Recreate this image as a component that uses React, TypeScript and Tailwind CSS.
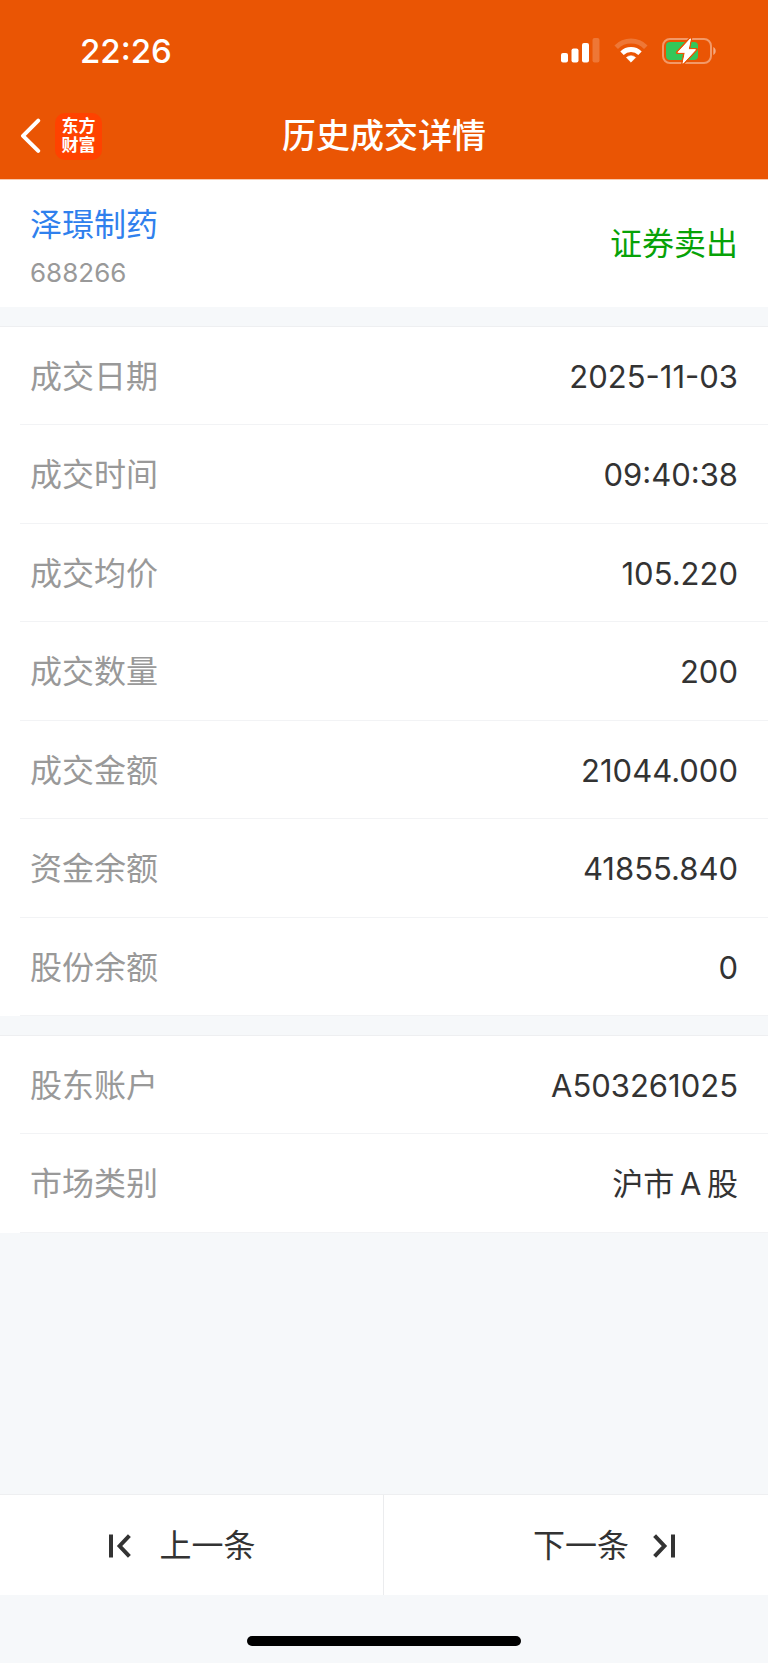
import clsx from "clsx";

type DetailItem = {
  label: string;
  value: string;
};

const tradeItems: DetailItem[] = [
  { label: "成交日期", value: "2025-11-03" },
  { label: "成交时间", value: "09:40:38" },
  { label: "成交均价", value: "105.220" },
  { label: "成交数量", value: "200" },
  { label: "成交金额", value: "21044.000" },
  { label: "资金余额", value: "41855.840" },
  { label: "股份余额", value: "0" },
];

// thin spaces around the latin letter
const accountItems: DetailItem[] = [
  { label: "股东账户", value: "A503261025" },
  { label: "市场类别", value: "沪市\u2009A\u2009股" },
];

function SignalIcon() {
  return (
    <svg width="39" height="26" viewBox="0 0 39 26" fill="white">
      <rect x="0" y="15" width="7" height="9.5" rx="2" />
      <rect x="10.5" y="10.5" width="7" height="14" rx="2" />
      <rect x="21" y="5" width="7" height="19.5" rx="2" />
      <rect x="31.5" y="0" width="7" height="24.5" rx="2" opacity="0.2" />
    </svg>
  );
}

function WifiIcon() {
  return (
    <svg width="34" height="26" viewBox="0 0 34 26" fill="none">
      <path
        d="M2.2 9.2a21 21 0 0 1 29.6 0"
        stroke="white"
        strokeWidth="5"
        opacity="0.2"
      />
      <path d="M8 15.2a12.8 12.8 0 0 1 18 0" stroke="white" strokeWidth="4.8" />
      <path
        d="M17 24.2l-4.6-4.6a6.6 6.6 0 0 1 9.2 0z"
        fill="white"
        stroke="white"
        strokeWidth="0.6"
        strokeLinejoin="round"
      />
    </svg>
  );
}

function BatteryIcon() {
  return (
    <svg width="54" height="26" viewBox="0 0 54 26" fill="none">
      <rect
        x="1"
        y="1"
        width="48"
        height="24"
        rx="7"
        stroke="white"
        strokeOpacity="0.4"
        strokeWidth="2"
      />
      <path d="M51.3 9c3.2 1.4 3.2 6.6 0 8z" fill="white" fillOpacity="0.5" />
      <rect x="4" y="4" width="32" height="18" rx="4" fill="#34c759" />
      <path
        d="M28.8 0L15.4 14.6h7.4L20.6 26 34.2 11.4h-7.6z"
        fill="white"
        stroke="#ea5504"
        strokeWidth="3"
        strokeLinejoin="round"
        paintOrder="stroke"
      />
      <path
        d="M28.4 1L16.4 14.2h7.2L21.2 25 33.2 11.8H26z"
        fill="white"
        stroke="white"
        strokeWidth="1"
        strokeLinejoin="round"
      />
    </svg>
  );
}

function SkipIcon({ flipped }: { flipped?: boolean }) {
  return (
    <svg
      width="22"
      height="24"
      viewBox="0 0 22 24"
      fill="none"
      stroke="#333333"
      strokeWidth="4"
      className={clsx(flipped && "-scale-x-100")}
    >
      <path d="M2 0.5v23" />
      <path d="M20.4 1.6L10.6 12l9.8 10.4" />
    </svg>
  );
}

function DetailSection({ items }: { items: DetailItem[] }) {
  return (
    <dl className="border-t border-[#eeeff1] bg-white">
      {items.map((item) => (
        <div key={item.label} className="group pl-5">
          <div className="flex h-[98px] items-center justify-between border-b border-[#f2f3f5] pt-0.5 pr-[30px] pl-2.5 group-even:h-[99px]">
            <dt className="text-[32px] leading-[44px] text-[#999999]">
              {item.label}
            </dt>
            <dd className="text-[31px] leading-[44px] text-[#333333]">
              {item.value}
            </dd>
          </div>
        </div>
      ))}
    </dl>
  );
}

export default function App() {
  return (
    <div className="flex min-h-screen flex-col bg-[#f6f8fa] font-['Inter','Noto_Sans_CJK_SC',sans-serif]">
      <header className="bg-[#ea5504] text-white">
        <div className="flex h-[93px] items-center justify-between pt-2 pr-[52px] pl-20">
          <time className="text-[33px] leading-[44px] font-medium">22:26</time>
          <div className="flex items-center gap-3.5">
            <SignalIcon />
            <WifiIcon />
            <BatteryIcon />
          </div>
        </div>
        <div className="grid h-[86px] grid-cols-[1fr_auto_1fr] items-center px-5">
          <div className="flex items-center gap-3.5">
            <button type="button" aria-label="返回">
              <svg
                width="21"
                height="36"
                viewBox="0 0 21 36"
                fill="none"
                stroke="white"
                strokeWidth="4"
                strokeLinecap="round"
                strokeLinejoin="round"
              >
                <path d="M18.2 2.6L3 17.8l15.2 15" />
              </svg>
            </button>
            <div className="flex size-[47px] flex-col items-center justify-center rounded-[10px] bg-[#ff4200] text-[17px] leading-[19px] font-bold">
              <span>东方</span>
              <span>财富</span>
            </div>
          </div>
          <h1 className="text-[34px] leading-[44px] font-medium">
            历史成交详情
          </h1>
        </div>
      </header>

      <main>
        <section className="flex h-32 items-center justify-between border-t border-[#f8c9ae] bg-white px-[30px]">
          <div className="flex flex-col gap-2 pt-1.5">
            <a href="#stock" className="text-[32px] leading-[44px] text-[#2f80ed]">
              泽璟制药
            </a>
            <span className="text-[26px] leading-[36px] text-[#999999]">
              688266
            </span>
          </div>
          <span className="text-[32px] leading-[44px] text-[#07a207]">
            证券卖出
          </span>
        </section>
        <div className="mt-[19px] flex flex-col gap-[19px]">
          <DetailSection items={tradeItems} />
          <DetailSection items={accountItems} />
        </div>
      </main>

      <footer className="mt-auto">
        <nav className="grid h-[101px] grid-cols-2 border-t border-[#eeeff1] bg-white text-[32px] leading-[44px] text-[#333333]">
          <button
            type="button"
            className="flex items-center justify-center gap-7 border-r border-[#ebecee] pt-0.5 pr-[18px]"
          >
            <SkipIcon />
            上一条
          </button>
          <button
            type="button"
            className="flex items-center justify-center gap-6 pt-0.5 pl-14"
          >
            下一条
            <SkipIcon flipped />
          </button>
        </nav>
        <div className="flex justify-center pt-[41px] pb-[17px]">
          <div className="h-2.5 w-[274px] rounded-full bg-black" />
        </div>
      </footer>
    </div>
  );
}
